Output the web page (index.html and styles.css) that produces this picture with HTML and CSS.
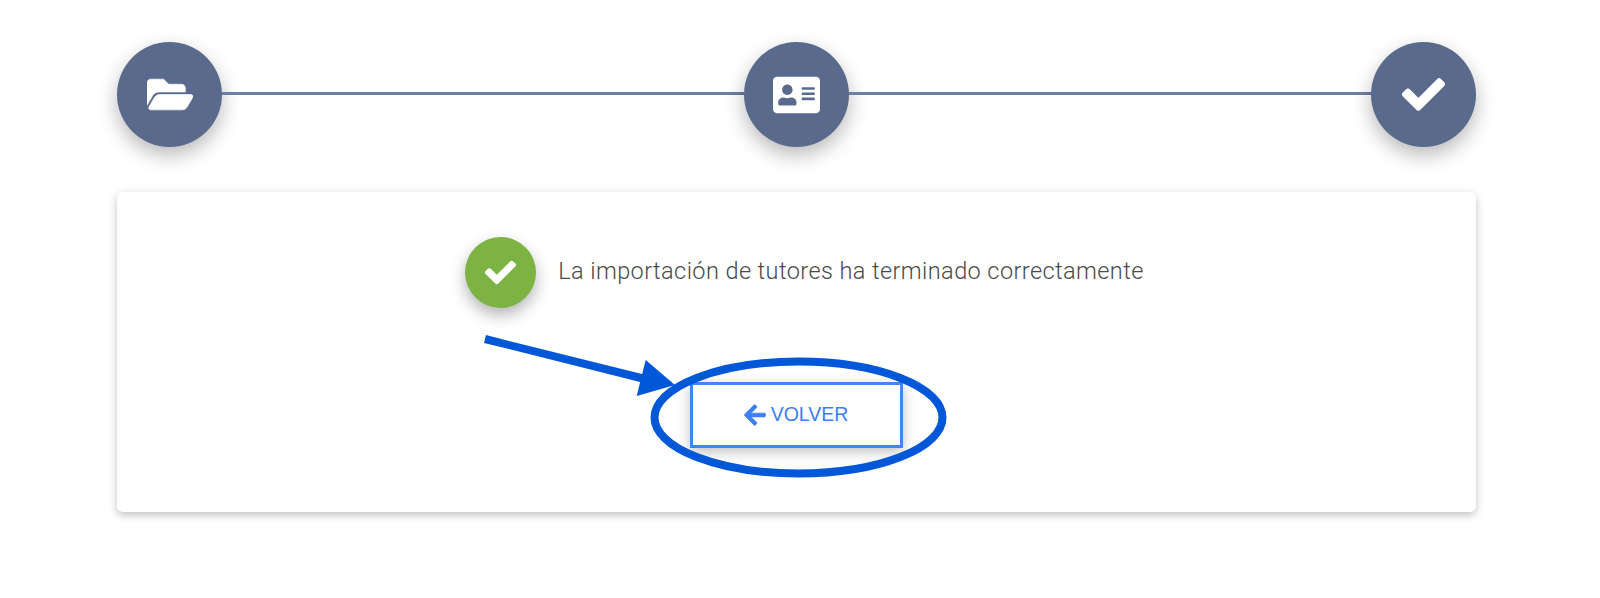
FILE: index.html
```html
<!DOCTYPE html>
<html lang="en">
<head>
    <meta charset="UTF-8">
    <title>Importación de tutores</title>
    <link rel="stylesheet" href="styles.css">
</head>
<body>
    <div class="wrapper">
        <div class="stepper">
            <div class="step">
                <svg class="icon-folder" viewBox="0 0 576 512"><path d="M572.694 292.093L500.27 416.248A63.997 63.997 0 0 1 444.989 448H45.025c-18.523 0-30.064-20.093-20.731-36.093l72.424-124.155A64 64 0 0 1 152 256h399.964c18.523 0 30.064 20.093 20.73 36.093zM152 224h328v-48c0-26.51-21.49-48-48-48H272l-64-64H48C21.49 64 0 85.49 0 112v278.046l69.077-118.418C86.214 242.25 117.989 224 152 224z"/></svg>
            </div>
            <div class="step-line"></div>
            <div class="step">
                <svg class="icon-card" viewBox="0 0 576 512"><path d="M528 32H48C21.5 32 0 53.5 0 80v352c0 26.5 21.5 48 48 48h480c26.5 0 48-21.5 48-48V80c0-26.5-21.5-48-48-48zm-352 96c35.3 0 64 28.7 64 64s-28.7 64-64 64-64-28.7-64-64 28.7-64 64-64zm112 236.8c0 10.6-10 19.2-22.4 19.2H86.4C74 384 64 375.4 64 364.8v-19.2c0-31.8 30.1-57.6 67.2-57.6h5c12.3 5.1 25.7 8 39.8 8s27.6-2.9 39.8-8h5c37.1 0 67.2 25.8 67.2 57.6v19.2zM512 312c0 4.4-3.6 8-8 8H360c-4.4 0-8-3.6-8-8v-16c0-4.4 3.6-8 8-8h144c4.4 0 8 3.6 8 8v16zm0-64c0 4.4-3.6 8-8 8H360c-4.4 0-8-3.6-8-8v-16c0-4.4 3.6-8 8-8h144c4.4 0 8 3.6 8 8v16zm0-64c0 4.4-3.6 8-8 8H360c-4.4 0-8-3.6-8-8v-16c0-4.4 3.6-8 8-8h144c4.4 0 8 3.6 8 8v16z"/></svg>
            </div>
            <div class="step-line"></div>
            <div class="step">
                <svg class="icon-check" viewBox="-12 -12 536 536"><path d="M173.898 439.404l-166.4-166.4c-9.997-9.997-9.997-26.206 0-36.204l36.203-36.204c9.997-9.998 26.207-9.998 36.204 0L192 312.69 432.095 72.596c9.997-9.997 26.207-9.997 36.204 0l36.203 36.204c9.997 9.997 9.997 26.206 0 36.204l-294.4 294.401c-9.998 9.997-26.207 9.997-36.204-.001z"/></svg>
            </div>
        </div>

        <div class="card">
            <div class="message">
                <div class="status">
                    <svg class="icon-status" viewBox="-12 -12 536 536"><path d="M173.898 439.404l-166.4-166.4c-9.997-9.997-9.997-26.206 0-36.204l36.203-36.204c9.997-9.998 26.207-9.998 36.204 0L192 312.69 432.095 72.596c9.997-9.997 26.207-9.997 36.204 0l36.203 36.204c9.997 9.997 9.997 26.206 0 36.204l-294.4 294.401c-9.998 9.997-26.207 9.997-36.204-.001z"/></svg>
                </div>
                <p class="message-text">La importación de tutores ha terminado correctamente</p>
            </div>
            <button class="back-button">
                <svg class="icon-back" viewBox="-8 0 464 512"><path d="M257.5 445.1l-22.2 22.2c-9.4 9.4-24.6 9.4-33.9 0L7 273c-9.4-9.4-9.4-24.6 0-33.9L201.4 44.7c9.4-9.4 24.6-9.4 33.9 0l22.2 22.2c9.5 9.5 9.3 25-.4 34.3L136.6 216H424c13.3 0 24 10.7 24 24v32c0 13.3-10.7 24-24 24H136.6l120.5 114.8c9.8 9.3 10 24.8.4 34.3z"/></svg>
                VOLVER
            </button>
        </div>
    </div>

    <!-- hand drawn annotation on top of the screenshot -->
    <svg class="annotation" viewBox="0 0 1600 598">
        <ellipse cx="798.5" cy="417.5" rx="144" ry="56" fill="none" stroke="#0057d8" stroke-width="8"/>
        <line x1="485" y1="339" x2="645" y2="379" stroke="#0057d8" stroke-width="8"/>
        <polygon points="645.7,360 636.7,396 675,385" fill="#0057d8"/>
    </svg>
</body>
</html>
```

FILE: styles.css
```css
html, body {
    height: 100%;
}
body {
    margin: 0;
    background-color: #fff;
    font-family: "Liberation Sans", Arial, sans-serif;
}
.wrapper {
    width: 1359px;
    margin-left: 117px;
    padding-top: 42px;
}
.stepper {
    display: flex;
    align-items: center;
    margin-bottom: 45px;
}
.step {
    display: flex;
    align-items: center;
    justify-content: center;
    flex-shrink: 0;
    width: 105px;
    height: 105px;
    border-radius: 50%;
    background-color: #5a6a8c;
    box-shadow: 0 8px 20px rgba(0, 0, 0, 0.28);
    fill: #fff;
    stroke: #fff;
    stroke-width: 8;
}
.step-line {
    flex: 1;
    height: 3px;
    margin-bottom: 3px;
    background-color: #6c7ea4;
}
.icon-folder {
    width: 46px;
    height: 41px;
}
.icon-card {
    width: 47px;
    height: 42px;
    stroke-width: 0;
}
.icon-check {
    width: 43px;
    height: 43px;
    stroke-width: 22;
    stroke-linejoin: round;
}
.card {
    display: flex;
    flex-direction: column;
    align-items: center;
    height: 275px;
    padding-top: 45px;
    background-color: #fff;
    border-radius: 6px;
    box-shadow: 0 3px 8px rgba(0, 0, 0, 0.25);
}
.message {
    display: flex;
    align-items: center;
    gap: 22px;
    padding-left: 16px;
    margin-bottom: 74px;
}
.status {
    display: flex;
    align-items: center;
    justify-content: center;
    width: 71px;
    height: 71px;
    border-radius: 50%;
    background-color: #7cb342;
    box-shadow: 0 7px 16px rgba(0, 0, 0, 0.3);
    fill: #fff;
    stroke: #fff;
    stroke-width: 22;
    stroke-linejoin: round;
}
.icon-status {
    width: 31px;
    height: 31px;
}
.message-text {
    margin: 0 0 3px;
    font-family: Roboto, sans-serif;
    font-size: 23.5px;
    font-weight: 300;
    letter-spacing: 0.42px;
    color: #4a4a4a;
}
.back-button {
    display: flex;
    align-items: center;
    justify-content: center;
    gap: 5px;
    box-sizing: border-box;
    width: 213px;
    height: 66px;
    margin-right: 1px;
    padding: 0 0 1px;
    background-color: #fff;
    border: 3px solid #4286f5;
    box-shadow: 0 4px 12px rgba(0, 0, 0, 0.25);
    color: #3d80f5;
    fill: #3d80f5;
    stroke: #3d80f5;
    stroke-width: 16;
    font-family: "Liberation Sans", Arial, sans-serif;
    font-size: 19.5px;
}
.icon-back {
    width: 22px;
    height: 24px;
}
.annotation {
    position: absolute;
    top: 0;
    left: 0;
    width: 1600px;
    height: 598px;
}
```
